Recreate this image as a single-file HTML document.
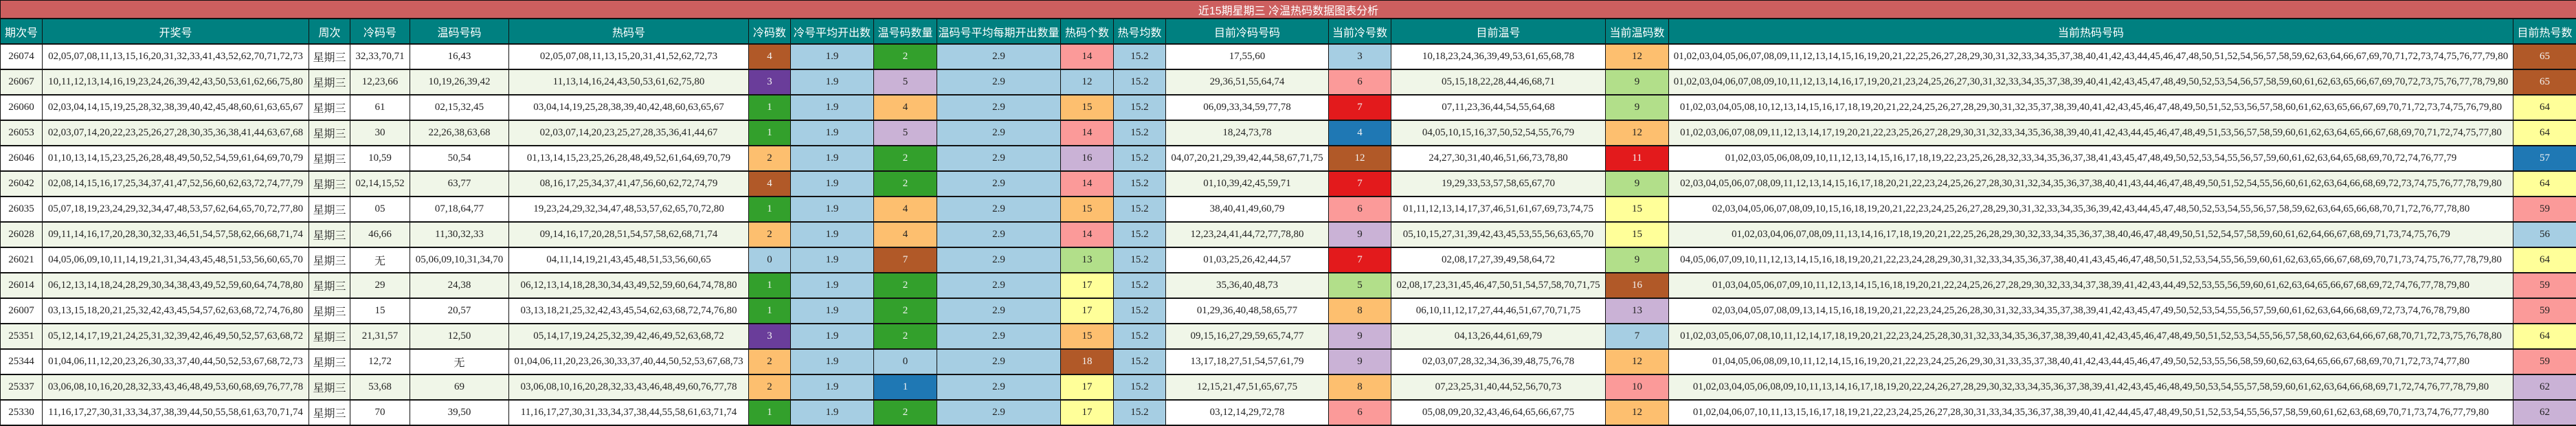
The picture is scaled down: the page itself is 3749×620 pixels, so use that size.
<!DOCTYPE html>
<html><head><meta charset="utf-8">
<style>
html,body{margin:0;padding:0;background:#fff;}
body{width:3749px;height:620px;overflow:hidden;}
table{border-collapse:collapse;table-layout:fixed;width:3749px;}
td,th{border-left:1px solid #111;border-right:1px solid #111;border-bottom:2px solid #111;padding:0;text-align:center;white-space:nowrap;overflow:hidden;}
td{height:35px;font-family:"Liberation Serif","Noto Serif CJK SC",serif;font-size:15px;color:#222;}
th{height:35px;background:#008080;color:#fff;font-weight:normal;font-family:"Liberation Sans","Noto Sans CJK SC",sans-serif;font-size:16px;}
.title{height:25px;background:#cd5f5f;color:#fff;font-family:"Liberation Sans","Noto Sans CJK SC",sans-serif;font-size:16px;border:1px solid #111;border-bottom:2px solid #111;}
tr.a td{background:#f0f6e8;}
td.wk{font-family:"Liberation Serif","Noto Serif CJK SC",serif;font-size:16px;}
tr td.br{background:#b15928;color:#f2f2f2}
tr td.pu{background:#6a3d9a;color:#f2f2f2}
tr td.gr{background:#33a02c;color:#f2f2f2}
tr td.lb{background:#a6cee3}
tr td.lv{background:#cab2d6}
tr td.or{background:#fdbf6f}
tr td.pk{background:#fb9a99}
tr td.rd{background:#e31a1c;color:#f2f2f2}
tr td.bl{background:#1f78b4;color:#f2f2f2}
tr td.lg{background:#b2df8a}
tr td.ye{background:#ffff99}
</style></head><body>
<table>
<colgroup>
<col style="width:61px"><col style="width:388px"><col style="width:60px"><col style="width:87px"><col style="width:144px"><col style="width:349px"><col style="width:61px"><col style="width:121px"><col style="width:92px"><col style="width:180px"><col style="width:77px"><col style="width:76px"><col style="width:237px"><col style="width:91px"><col style="width:312px"><col style="width:92px"><col style="width:1229px"><col style="width:92px">
</colgroup>
<tr><td class="title" colspan="18">近15期星期三 冷温热码数据图表分析</td></tr>
<tr><th>期次号</th><th>开奖号</th><th>周次</th><th>冷码号</th><th>温码号码</th><th>热码号</th><th>冷码数</th><th>冷号平均开出数</th><th>温号码数量</th><th>温码号平均每期开出数量</th><th>热码个数</th><th>热号均数</th><th>目前冷码号码</th><th>当前冷号数</th><th>目前温号</th><th>当前温码数</th><th>当前热码号码</th><th>目前热号数</th></tr>

<tr><td>26074</td><td>02,05,07,08,11,13,15,16,20,31,32,33,41,43,52,62,70,71,72,73</td><td class="wk">星期三</td><td>32,33,70,71</td><td>16,43</td><td>02,05,07,08,11,13,15,20,31,41,52,62,72,73</td><td class="br">4</td><td class="lb">1.9</td><td class="gr">2</td><td class="lb">2.9</td><td class="pk">14</td><td class="lb">15.2</td><td>17,55,60</td><td class="lb">3</td><td>10,18,23,24,36,39,49,53,61,65,68,78</td><td class="or">12</td><td>01,02,03,04,05,06,07,08,09,11,12,13,14,15,16,19,20,21,22,25,26,27,28,29,30,31,32,33,34,35,37,38,40,41,42,43,44,45,46,47,48,50,51,52,54,56,57,58,59,62,63,64,66,67,69,70,71,72,73,74,75,76,77,79,80</td><td class="br">65</td></tr>

<tr class="a"><td>26067</td><td>10,11,12,13,14,16,19,23,24,26,39,42,43,50,53,61,62,66,75,80</td><td class="wk">星期三</td><td>12,23,66</td><td>10,19,26,39,42</td><td>11,13,14,16,24,43,50,53,61,62,75,80</td><td class="pu">3</td><td class="lb">1.9</td><td class="lv">5</td><td class="lb">2.9</td><td class="lb">12</td><td class="lb">15.2</td><td>29,36,51,55,64,74</td><td class="pk">6</td><td>05,15,18,22,28,44,46,68,71</td><td class="lg">9</td><td>01,02,03,04,06,07,08,09,10,11,12,13,14,16,17,19,20,21,23,24,25,26,27,30,31,32,33,34,35,37,38,39,40,41,42,43,45,47,48,49,50,52,53,54,56,57,58,59,60,61,62,63,65,66,67,69,70,72,73,75,76,77,78,79,80</td><td class="br">65</td></tr>

<tr><td>26060</td><td>02,03,04,14,15,19,25,28,32,38,39,40,42,45,48,60,61,63,65,67</td><td class="wk">星期三</td><td>61</td><td>02,15,32,45</td><td>03,04,14,19,25,28,38,39,40,42,48,60,63,65,67</td><td class="gr">1</td><td class="lb">1.9</td><td class="or">4</td><td class="lb">2.9</td><td class="or">15</td><td class="lb">15.2</td><td>06,09,33,34,59,77,78</td><td class="rd">7</td><td>07,11,23,36,44,54,55,64,68</td><td class="lg">9</td><td>01,02,03,04,05,08,10,12,13,14,15,16,17,18,19,20,21,22,24,25,26,27,28,29,30,31,32,35,37,38,39,40,41,42,43,45,46,47,48,49,50,51,52,53,56,57,58,60,61,62,63,65,66,67,69,70,71,72,73,74,75,76,79,80</td><td class="ye">64</td></tr>

<tr class="a"><td>26053</td><td>02,03,07,14,20,22,23,25,26,27,28,30,35,36,38,41,44,63,67,68</td><td class="wk">星期三</td><td>30</td><td>22,26,38,63,68</td><td>02,03,07,14,20,23,25,27,28,35,36,41,44,67</td><td class="gr">1</td><td class="lb">1.9</td><td class="lv">5</td><td class="lb">2.9</td><td class="pk">14</td><td class="lb">15.2</td><td>18,24,73,78</td><td class="bl">4</td><td>04,05,10,15,16,37,50,52,54,55,76,79</td><td class="or">12</td><td>01,02,03,06,07,08,09,11,12,13,14,17,19,20,21,22,23,25,26,27,28,29,30,31,32,33,34,35,36,38,39,40,41,42,43,44,45,46,47,48,49,51,53,56,57,58,59,60,61,62,63,64,65,66,67,68,69,70,71,72,74,75,77,80</td><td class="ye">64</td></tr>

<tr><td>26046</td><td>01,10,13,14,15,23,25,26,28,48,49,50,52,54,59,61,64,69,70,79</td><td class="wk">星期三</td><td>10,59</td><td>50,54</td><td>01,13,14,15,23,25,26,28,48,49,52,61,64,69,70,79</td><td class="or">2</td><td class="lb">1.9</td><td class="gr">2</td><td class="lb">2.9</td><td class="lv">16</td><td class="lb">15.2</td><td>04,07,20,21,29,39,42,44,58,67,71,75</td><td class="br">12</td><td>24,27,30,31,40,46,51,66,73,78,80</td><td class="rd">11</td><td>01,02,03,05,06,08,09,10,11,12,13,14,15,16,17,18,19,22,23,25,26,28,32,33,34,35,36,37,38,41,43,45,47,48,49,50,52,53,54,55,56,57,59,60,61,62,63,64,65,68,69,70,72,74,76,77,79</td><td class="bl">57</td></tr>

<tr class="a"><td>26042</td><td>02,08,14,15,16,17,25,34,37,41,47,52,56,60,62,63,72,74,77,79</td><td class="wk">星期三</td><td>02,14,15,52</td><td>63,77</td><td>08,16,17,25,34,37,41,47,56,60,62,72,74,79</td><td class="br">4</td><td class="lb">1.9</td><td class="gr">2</td><td class="lb">2.9</td><td class="pk">14</td><td class="lb">15.2</td><td>01,10,39,42,45,59,71</td><td class="rd">7</td><td>19,29,33,53,57,58,65,67,70</td><td class="lg">9</td><td>02,03,04,05,06,07,08,09,11,12,13,14,15,16,17,18,20,21,22,23,24,25,26,27,28,30,31,32,34,35,36,37,38,40,41,43,44,46,47,48,49,50,51,52,54,55,56,60,61,62,63,64,66,68,69,72,73,74,75,76,77,78,79,80</td><td class="ye">64</td></tr>

<tr><td>26035</td><td>05,07,18,19,23,24,29,32,34,47,48,53,57,62,64,65,70,72,77,80</td><td class="wk">星期三</td><td>05</td><td>07,18,64,77</td><td>19,23,24,29,32,34,47,48,53,57,62,65,70,72,80</td><td class="gr">1</td><td class="lb">1.9</td><td class="or">4</td><td class="lb">2.9</td><td class="or">15</td><td class="lb">15.2</td><td>38,40,41,49,60,79</td><td class="pk">6</td><td>01,11,12,13,14,17,37,46,51,61,67,69,73,74,75</td><td class="ye">15</td><td>02,03,04,05,06,07,08,09,10,15,16,18,19,20,21,22,23,24,25,26,27,28,29,30,31,32,33,34,35,36,39,42,43,44,45,47,48,50,52,53,54,55,56,57,58,59,62,63,64,65,66,68,70,71,72,76,77,78,80</td><td class="pk">59</td></tr>

<tr class="a"><td>26028</td><td>09,11,14,16,17,20,28,30,32,33,46,51,54,57,58,62,66,68,71,74</td><td class="wk">星期三</td><td>46,66</td><td>11,30,32,33</td><td>09,14,16,17,20,28,51,54,57,58,62,68,71,74</td><td class="or">2</td><td class="lb">1.9</td><td class="or">4</td><td class="lb">2.9</td><td class="pk">14</td><td class="lb">15.2</td><td>12,23,24,41,44,72,77,78,80</td><td class="lv">9</td><td>05,10,15,27,31,39,42,43,45,53,55,56,63,65,70</td><td class="ye">15</td><td>01,02,03,04,06,07,08,09,11,13,14,16,17,18,19,20,21,22,25,26,28,29,30,32,33,34,35,36,37,38,40,46,47,48,49,50,51,52,54,57,58,59,60,61,62,64,66,67,68,69,71,73,74,75,76,79</td><td class="lb">56</td></tr>

<tr><td>26021</td><td>04,05,06,09,10,11,14,19,21,31,34,43,45,48,51,53,56,60,65,70</td><td class="wk">星期三</td><td class="wk">无</td><td>05,06,09,10,31,34,70</td><td>04,11,14,19,21,43,45,48,51,53,56,60,65</td><td class="lb">0</td><td class="lb">1.9</td><td class="br">7</td><td class="lb">2.9</td><td class="lg">13</td><td class="lb">15.2</td><td>01,03,25,26,42,44,57</td><td class="rd">7</td><td>02,08,17,27,39,49,58,64,72</td><td class="lg">9</td><td>04,05,06,07,09,10,11,12,13,14,15,16,18,19,20,21,22,23,24,28,29,30,31,32,33,34,35,36,37,38,40,41,43,45,46,47,48,50,51,52,53,54,55,56,59,60,61,62,63,65,66,67,68,69,70,71,73,74,75,76,77,78,79,80</td><td class="ye">64</td></tr>

<tr class="a"><td>26014</td><td>06,12,13,14,18,24,28,29,30,34,38,43,49,52,59,60,64,74,78,80</td><td class="wk">星期三</td><td>29</td><td>24,38</td><td>06,12,13,14,18,28,30,34,43,49,52,59,60,64,74,78,80</td><td class="gr">1</td><td class="lb">1.9</td><td class="gr">2</td><td class="lb">2.9</td><td class="ye">17</td><td class="lb">15.2</td><td>35,36,40,48,73</td><td class="lg">5</td><td>02,08,17,23,31,45,46,47,50,51,54,57,58,70,71,75</td><td class="br">16</td><td>01,03,04,05,06,07,09,10,11,12,13,14,15,16,18,19,20,21,22,24,25,26,27,28,29,30,32,33,34,37,38,39,41,42,43,44,49,52,53,55,56,59,60,61,62,63,64,65,66,67,68,69,72,74,76,77,78,79,80</td><td class="pk">59</td></tr>

<tr><td>26007</td><td>03,13,15,18,20,21,25,32,42,43,45,54,57,62,63,68,72,74,76,80</td><td class="wk">星期三</td><td>15</td><td>20,57</td><td>03,13,18,21,25,32,42,43,45,54,62,63,68,72,74,76,80</td><td class="gr">1</td><td class="lb">1.9</td><td class="gr">2</td><td class="lb">2.9</td><td class="ye">17</td><td class="lb">15.2</td><td>01,29,36,40,48,58,65,77</td><td class="or">8</td><td>06,10,11,12,17,27,44,46,51,67,70,71,75</td><td class="lv">13</td><td>02,03,04,05,07,08,09,13,14,15,16,18,19,20,21,22,23,24,25,26,28,30,31,32,33,34,35,37,38,39,41,42,43,45,47,49,50,52,53,54,55,56,57,59,60,61,62,63,64,66,68,69,72,73,74,76,78,79,80</td><td class="pk">59</td></tr>

<tr class="a"><td>25351</td><td>05,12,14,17,19,21,24,25,31,32,39,42,46,49,50,52,57,63,68,72</td><td class="wk">星期三</td><td>21,31,57</td><td>12,50</td><td>05,14,17,19,24,25,32,39,42,46,49,52,63,68,72</td><td class="pu">3</td><td class="lb">1.9</td><td class="gr">2</td><td class="lb">2.9</td><td class="or">15</td><td class="lb">15.2</td><td>09,15,16,27,29,59,65,74,77</td><td class="lv">9</td><td>04,13,26,44,61,69,79</td><td class="lb">7</td><td>01,02,03,05,06,07,08,10,11,12,14,17,18,19,20,21,22,23,24,25,28,30,31,32,33,34,35,36,37,38,39,40,41,42,43,45,46,47,48,49,50,51,52,53,54,55,56,57,58,60,62,63,64,66,67,68,70,71,72,73,75,76,78,80</td><td class="ye">64</td></tr>

<tr><td>25344</td><td>01,04,06,11,12,20,23,26,30,33,37,40,44,50,52,53,67,68,72,73</td><td class="wk">星期三</td><td>12,72</td><td class="wk">无</td><td>01,04,06,11,20,23,26,30,33,37,40,44,50,52,53,67,68,73</td><td class="or">2</td><td class="lb">1.9</td><td class="lb">0</td><td class="lb">2.9</td><td class="br">18</td><td class="lb">15.2</td><td>13,17,18,27,51,54,57,61,79</td><td class="lv">9</td><td>02,03,07,28,32,34,36,39,48,75,76,78</td><td class="or">12</td><td>01,04,05,06,08,09,10,11,12,14,15,16,19,20,21,22,23,24,25,26,29,30,31,33,35,37,38,40,41,42,43,44,45,46,47,49,50,52,53,55,56,58,59,60,62,63,64,65,66,67,68,69,70,71,72,73,74,77,80</td><td class="pk">59</td></tr>

<tr class="a"><td>25337</td><td>03,06,08,10,16,20,28,32,33,43,46,48,49,53,60,68,69,76,77,78</td><td class="wk">星期三</td><td>53,68</td><td>69</td><td>03,06,08,10,16,20,28,32,33,43,46,48,49,60,76,77,78</td><td class="or">2</td><td class="lb">1.9</td><td class="bl">1</td><td class="lb">2.9</td><td class="ye">17</td><td class="lb">15.2</td><td>12,15,21,47,51,65,67,75</td><td class="or">8</td><td>07,23,25,31,40,44,52,56,70,73</td><td class="pk">10</td><td>01,02,03,04,05,06,08,09,10,11,13,14,16,17,18,19,20,22,24,26,27,28,29,30,32,33,34,35,36,37,38,39,41,42,43,45,46,48,49,50,53,54,55,57,58,59,60,61,62,63,64,66,68,69,71,72,74,76,77,78,79,80</td><td class="lv">62</td></tr>

<tr><td>25330</td><td>11,16,17,27,30,31,33,34,37,38,39,44,50,55,58,61,63,70,71,74</td><td class="wk">星期三</td><td>70</td><td>39,50</td><td>11,16,17,27,30,31,33,34,37,38,44,55,58,61,63,71,74</td><td class="gr">1</td><td class="lb">1.9</td><td class="gr">2</td><td class="lb">2.9</td><td class="ye">17</td><td class="lb">15.2</td><td>03,12,14,29,72,78</td><td class="pk">6</td><td>05,08,09,20,32,43,46,64,65,66,67,75</td><td class="or">12</td><td>01,02,04,06,07,10,11,13,15,16,17,18,19,21,22,23,24,25,26,27,28,30,31,33,34,35,36,37,38,39,40,41,42,44,45,47,48,49,50,51,52,53,54,55,56,57,58,59,60,61,62,63,68,69,70,71,73,74,76,77,79,80</td><td class="lv">62</td></tr>
</table>
</body></html>
